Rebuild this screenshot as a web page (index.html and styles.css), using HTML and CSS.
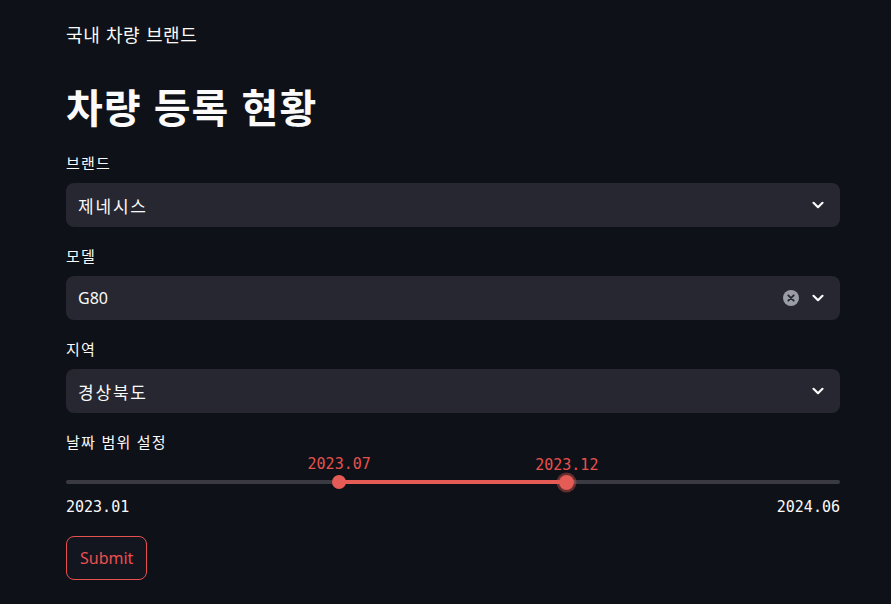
FILE: index.html
```html
<!DOCTYPE html>
<html lang="ko">
<head>
<meta charset="utf-8">
<link rel="stylesheet" href="styles.css">
</head>
<body>
<main class="main">
  <p class="caption">국내 차량 브랜드</p>
  <h1 class="title">차량 등록 현황</h1>

  <div class="field">
    <label class="label">브랜드</label>
    <div class="select">
      <span class="select-value">제네시스</span>
      <div class="select-icons">
        <svg class="chevron" width="20" height="20" viewBox="0 0 20 20"><path d="M5.5 7.8 L10 12.2 L14.5 7.8" fill="none" stroke="#fafafa" stroke-width="2.2" stroke-linecap="round" stroke-linejoin="round"/></svg>
      </div>
    </div>
  </div>

  <div class="field">
    <label class="label">모델</label>
    <div class="select">
      <span class="select-value latin">G80</span>
      <div class="select-icons">
        <svg class="clear" width="18" height="18" viewBox="0 0 18 18"><circle cx="9" cy="9" r="8" fill="#9a9ca6"/><path d="M6.3 6.3 L11.7 11.7 M11.7 6.3 L6.3 11.7" stroke="#262730" stroke-width="1.8" stroke-linecap="round"/></svg>
        <svg class="chevron" width="20" height="20" viewBox="0 0 20 20"><path d="M5.5 7.8 L10 12.2 L14.5 7.8" fill="none" stroke="#fafafa" stroke-width="2.2" stroke-linecap="round" stroke-linejoin="round"/></svg>
      </div>
    </div>
  </div>

  <div class="field">
    <label class="label">지역</label>
    <div class="select">
      <span class="select-value">경상북도</span>
      <div class="select-icons">
        <svg class="chevron" width="20" height="20" viewBox="0 0 20 20"><path d="M5.5 7.8 L10 12.2 L14.5 7.8" fill="none" stroke="#fafafa" stroke-width="2.2" stroke-linecap="round" stroke-linejoin="round"/></svg>
      </div>
    </div>
  </div>

  <div class="field slider-field">
    <label class="label">날짜 범위 설정</label>
    <div class="slider">
      <div class="track">
        <div class="range" style="left:35.294%;width:29.412%"></div>
        <div class="thumb" style="left:35.294%"><span class="thumb-value">2023.07</span></div>
        <div class="thumb focused" style="left:64.706%"><span class="thumb-value">2023.12</span></div>
      </div>
      <div class="ticks">
        <span>2023.01</span>
        <span>2024.06</span>
      </div>
    </div>
  </div>

  <button class="submit">Submit</button>
</main>
</body>
</html>
```

FILE: styles.css
```css
html, body {
  margin: 0;
  padding: 0;
  background: #0e1117;
}
body {
  color: #fafafa;
  font-family: "Noto Sans", "Noto Sans CJK KR", sans-serif;
}
.main {
  width: 774px;
  margin: 0 0 0 66px;
  padding: 20px 0 0 0;
  box-sizing: border-box;
  display: flex;
  flex-direction: column;
}
.caption {
  margin: 0;
  font-size: 18px;
  line-height: 28px;
  letter-spacing: 0.6px;
  font-family: "Noto Sans CJK KR", sans-serif;
}
.title {
  margin: 32px 0 20px 0;
  font-size: 40px;
  line-height: 52px;
  letter-spacing: 1px;
  font-weight: 700;
  font-family: "Noto Sans CJK KR", sans-serif;
}
.field {
  display: flex;
  flex-direction: column;
}
.field + .field {
  margin-top: 18px;
}
.label {
  font-size: 15px;
  line-height: 21px;
  letter-spacing: 1.2px;
  margin-bottom: 10px;
  font-family: "Noto Sans CJK KR", sans-serif;
}
.select {
  height: 44px;
  background: #262730;
  border-radius: 8px;
  display: flex;
  align-items: center;
  justify-content: space-between;
  padding: 0 12px;
}
.select-value {
  font-size: 17px;
  letter-spacing: 1.8px;
  font-family: "Noto Sans CJK KR", sans-serif;
}
.select-value.latin {
  font-family: "Noto Sans", sans-serif;
  font-size: 16px;
  letter-spacing: 0;
}
.select-icons {
  display: flex;
  align-items: center;
  gap: 8px;
}
.chevron { display: block; }
.clear { display: block; }

.slider-field .label { margin-bottom: 0; }
.slider {
  display: flex;
  flex-direction: column;
  padding-top: 28px;
}
.track {
  position: relative;
  height: 4px;
  border-radius: 2px;
  background: #3a3b42;
}
.range {
  position: absolute;
  top: 0;
  height: 4px;
  background: #e55b55;
}
.thumb {
  position: absolute;
  top: 2px;
  width: 14px;
  height: 14px;
  margin: -7px 0 0 -7px;
  border-radius: 50%;
  background: #e55b55;
}
.thumb.focused {
  width: 15px;
  height: 15px;
  margin: -7.5px 0 0 -7.5px;
  box-shadow: 0 0 0 2.5px rgba(229, 91, 85, 0.4);
}
.thumb-value {
  position: absolute;
  left: 50%;
  bottom: 16px;
  transform: translateX(-50%);
  font-family: "DejaVu Sans Mono", monospace;
  font-size: 15px;
  line-height: 18px;
  color: #e5514e;
  white-space: nowrap;
}
.ticks {
  display: flex;
  justify-content: space-between;
  margin-top: 13px;
  font-family: "DejaVu Sans Mono", monospace;
  font-size: 15px;
  line-height: 20px;
}
.submit {
  align-self: flex-start;
  margin-top: 19px;
  height: 44px;
  padding: 0 13px;
  border: 1px solid #e5514e;
  border-radius: 8px;
  background: #13161f;
  color: #ec4f4f;
  font-family: "Noto Sans", sans-serif;
  font-size: 16px;
  cursor: pointer;
}
```
